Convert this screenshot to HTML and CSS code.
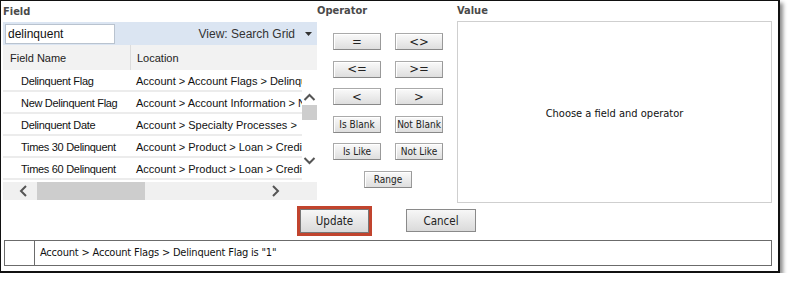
FILE: index.html
```html
<!DOCTYPE html>
<html lang="en">
<head>
<meta charset="UTF-8" />
<title>Filter Condition</title>
<link rel="stylesheet" href="styles.css">
</head>
<body>

<div class="dialog">
  <div class="top">

    <!-- field picker -->
    <div class="col-field">
      <div class="col-title">Field</div>
      <div class="grid-bar">
        <input type="text" class="search" value="delinquent" />
        <span class="view">View: Search Grid</span>
        <svg class="caret" width="7" height="4" viewBox="0 0 7 4"><path d="M0 0h7L3.5 4z" fill="#333"/></svg>
      </div>
      <div class="grid-head">
        <div class="c-name">Field Name</div>
        <div class="c-loc">Location</div>
      </div>
      <div class="grid-body">
        <div class="rows">
          <div class="row"><div class="c-name">Delinquent Flag</div><div class="c-loc">Account &gt; Account Flags &gt; Delinquent Flag</div></div>
          <div class="row"><div class="c-name">New Delinquent Flag</div><div class="c-loc">Account &gt; Account Information &gt; New</div></div>
          <div class="row"><div class="c-name">Delinquent Date</div><div class="c-loc">Account &gt; Specialty Processes &gt;</div></div>
          <div class="row"><div class="c-name">Times 30 Delinquent</div><div class="c-loc">Account &gt; Product &gt; Loan &gt; Credit</div></div>
          <div class="row"><div class="c-name">Times 60 Delinquent</div><div class="c-loc">Account &gt; Product &gt; Loan &gt; Credit</div></div>
        </div>
        <div class="vscroll">
          <svg class="v-up" width="15" height="35" viewBox="0 0 15 35"><path d="M2.5 30l5-5 5 5" fill="none" stroke="#555" stroke-width="2"/></svg>
          <svg class="v-track" width="15" height="15" viewBox="0 0 15 15"><rect width="15" height="15" fill="#cdcdcd"/></svg>
          <svg class="v-down" width="15" height="46" viewBox="0 0 15 46"><path d="M2.5 38l5 5 5-5" fill="none" stroke="#555" stroke-width="2"/></svg>
        </div>
      </div>
      <div class="hscroll">
        <svg width="8" height="12" viewBox="0 0 8 12"><path d="M7 1L2 6l5 5" fill="none" stroke="#555" stroke-width="2"/></svg>
        <div class="hthumb"></div>
        <svg class="arrow-right" width="8" height="12" viewBox="0 0 8 12"><path d="M1 1l5 5-5 5" fill="none" stroke="#555" stroke-width="2"/></svg>
      </div>
    </div>

    <!-- operators -->
    <div class="col-op">
      <div class="col-title">Operator</div>
      <div class="op-grid">
        <button class="op big">=</button>
        <button class="op big">&lt;&gt;</button>
        <button class="op big">&lt;=</button>
        <button class="op big">&gt;=</button>
        <button class="op big">&lt;</button>
        <button class="op big">&gt;</button>
        <button class="op">Is Blank</button>
        <button class="op">Not Blank</button>
        <button class="op">Is Like</button>
        <button class="op">Not Like</button>
        <button class="op range">Range</button>
      </div>
    </div>

    <!-- value -->
    <div class="col-value">
      <div class="col-title">Value</div>
      <div class="value-box">Choose a field and operator</div>
    </div>
  </div>

  <div class="actions">
    <div class="highlight"><button class="btn">Update</button></div>
    <button class="btn cancel">Cancel</button>
  </div>

  <div class="summary">
    <div class="summary-num"></div>
    <div class="summary-text">Account &gt; Account Flags &gt; Delinquent Flag is "1"</div>
  </div>
</div>

</body>
</html>
```

FILE: styles.css
```css
/* filter condition dialog */
body { margin: 0; background: #fff; font-family: "DejaVu Sans Condensed", Tahoma, sans-serif; color: #222; }

.dialog {
  width: 769px;
  padding: 0 6px 5px 2px;
  border: 1px solid #111;
  border-right-width: 2px;
  border-bottom-width: 2px;
  box-shadow: 3px 3px 4px rgba(0,0,0,0.45);
}

.top { display: flex; height: 200px; }

.col-title {
  height: 20px;
  line-height: 20px;
  font-size: 11px;
  font-weight: bold;
  color: #4a4a4a;
}

/* field grid */
.col-field { width: 314px; flex: none; font-family: "Liberation Sans", Arial, sans-serif; font-size: 11px; }
.col-field .col-title { font-family: "DejaVu Sans Condensed", Tahoma, sans-serif; height: 21px; line-height: 21px; }
.grid-bar {
  height: 23px;
  background: #dbe5f2;
  display: flex;
  align-items: center;
  padding: 0 8px 0 2px;
}
.search {
  width: 104px;
  height: 18px;
  margin: 0;
  padding: 0 2px;
  border: 1px solid #b9c3cf;
  font-family: "Liberation Sans", Arial, sans-serif;
  font-size: 12px;
  color: #111;
  box-sizing: content-box;
}
.view { margin-left: auto; font-size: 12px; color: #333; }
.caret { margin-left: 10px; margin-right: -3px; }

.grid-head {
  height: 25px;
  background: #f2f2f2;
  display: flex;
  align-items: center;
  color: #222;
}
.grid-head .c-name { border-right: 1px solid #dcdcdc; height: 25px; line-height: 26px; padding-left: 7px; }
.grid-head .c-loc { padding-left: 6px; padding-top: 1px; }

.c-name { width: 120px; flex: none; padding-left: 18px; }
.c-loc { padding-left: 6px; white-space: nowrap; overflow: hidden; }

.grid-body { height: 112px; display: flex; }
.rows { width: 299px; flex: none; overflow: hidden; }
.row {
  height: 20px;
  line-height: 22px;
  display: flex;
  border-bottom: 2px solid #ececec;
  color: #111;
}
.row .c-name { width: 109px; letter-spacing: -0.3px; }

/* vertical scrollbar: up arrow, thumb, down arrow stacked */
.vscroll { width: 15px; flex: none; }
.vscroll svg { display: block; }

.hscroll {
  height: 18px;
  background: #f0f0f0;
  display: flex;
  align-items: center;
  padding-left: 16px;
}
.hthumb { width: 108px; height: 18px; background: #cdcdcd; margin-left: 10px; }
.arrow-right { margin-left: 127px; }

/* operators */
.col-op { width: 140px; flex: none; }
.op-grid {
  display: grid;
  grid-template-columns: 48px 48px;
  grid-auto-rows: 17px;
  column-gap: 14px;
  row-gap: 10.5px;
  margin: 12px 0 0 16px;
}
.op {
  margin: 0;
  padding: 0;
  border: 1px solid #aaa;
  border-bottom-color: #888;
  border-right-color: #999;
  background: linear-gradient(#fafafa, #dedede);
  box-shadow: inset 1px 1px 0 #fff;
  font-family: "DejaVu Sans Condensed", Tahoma, sans-serif;
  font-size: 10px;
  color: #222;
  white-space: nowrap;
}
.op.big { font-size: 13px; line-height: 14px; }
.op.range { grid-column: 1 / span 2; justify-self: center; width: 48px; }

/* value */
.col-value { width: 315px; flex: none; }
.value-box {
  height: 178px;
  border: 1px solid #cfcfcf;
  display: flex;
  align-items: center;
  justify-content: center;
  padding-top: 2px;
  box-sizing: content-box;
  font-size: 11px;
  color: #111;
}

/* buttons */
.actions {
  height: 39px;
  display: flex;
  align-items: center;
  padding-left: 294px;
}
.highlight { border: 3px solid #c1442e; display: flex; }
.btn {
  width: 69px;
  height: 24px;
  margin: 0;
  border: 1px solid #777;
  background: linear-gradient(#f7f7f7, #dadada);
  font-family: "DejaVu Sans Condensed", Tahoma, sans-serif;
  font-size: 11.5px;
  color: #222;
}
.cancel { width: 70px; height: 23px; margin-left: 34px; border-color: #8a8a8a; }

/* summary line */
.summary {
  height: 24px;
  margin-left: 1px;
  border: 1px solid #6b6b6b;
  display: flex;
}
.summary-num { width: 29px; border-right: 1px solid #6b6b6b; }
.summary-text { padding-left: 5px; line-height: 24px; font-size: 11px; letter-spacing: -0.2px; color: #111; }
```
